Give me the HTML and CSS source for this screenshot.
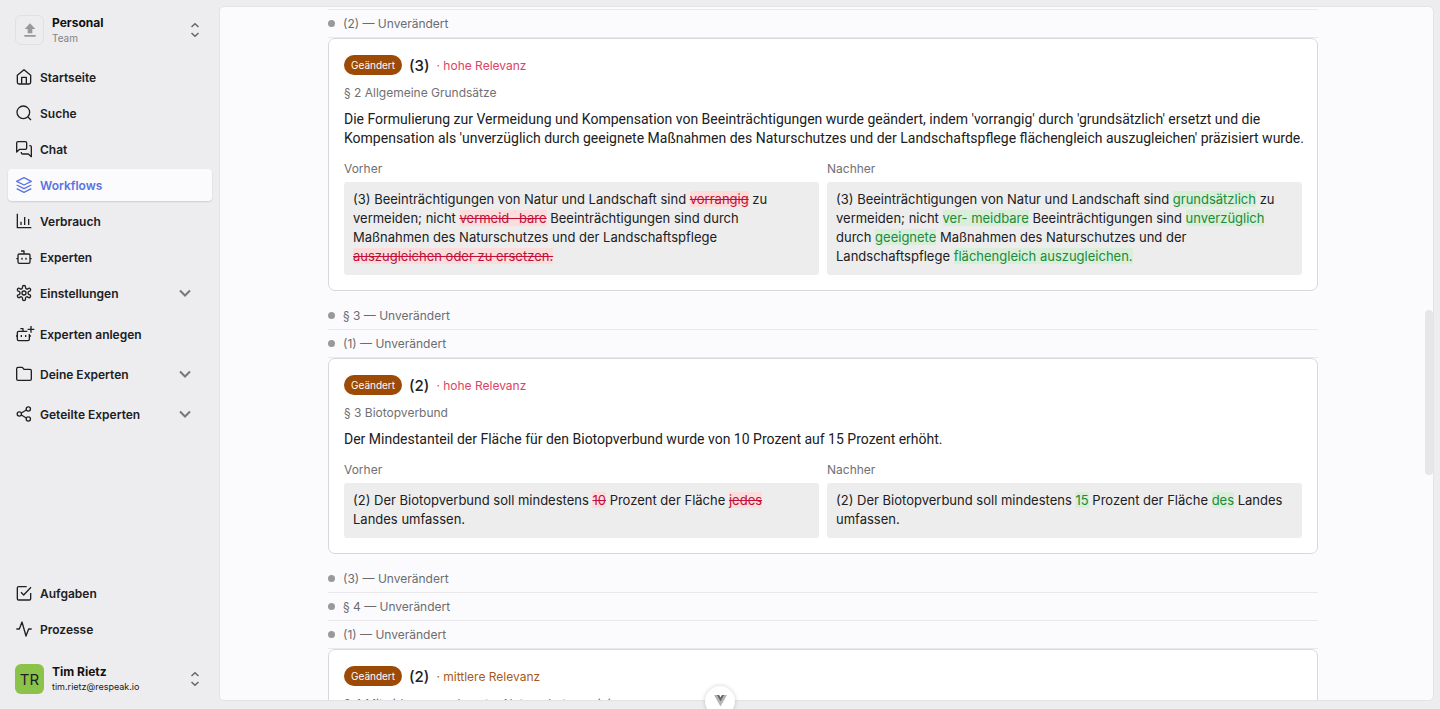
FILE: index.html
```html
<!DOCTYPE html>
<html lang="de">
<head>
<meta charset="utf-8">
<title>Workflows</title>
<link rel="stylesheet" href="styles.css">
</head>
<body>
<svg class="defs" aria-hidden="true">
  <symbol id="updown" viewBox="0 0 12 18"><path d="M2.500 6 6 2.800 9.500 6M2.500 12 6 15.200l3.500-3.200"/></symbol>
  <symbol id="chevron" viewBox="0 0 12 12"><path d="M1 3.500l5 5 5-5"/></symbol>
</svg>
<div class="app">
  <aside class="sidebar">
    <button class="account" type="button">
      <span class="team-logo"><svg viewBox="0 0 24 24" class="upload"><path d="M12 2 4 10.500h4.500V17h7v-6.500H20zM3.500 19.500h17V22h-17z"/></svg></span>
      <span class="account-text"><strong>Personal</strong><small class="muted">Team</small></span>
      <svg class="updown"><use href="#updown"/></svg>
    </button>
    <nav class="nav">
      <a class="item" href="#"><svg class="icon" viewBox="0 0 24 24"><path d="M2 9.500 12 1l10 8.500V20a2.500 2.500 0 0 1-2.500 2.500h-15A2.500 2.500 0 0 1 2 20z"/><path d="M8.500 22v-9.500h7V22"/></svg>Startseite</a>
      <a class="item" href="#"><svg class="icon" viewBox="0 0 24 24"><circle cx="11" cy="11" r="9.500"/><path d="m18 18 4.500 4.500"/></svg>Suche</a>
      <a class="item" href="#"><svg class="icon" viewBox="0 0 24 24"><path d="M16 10.500a2 2 0 0 1-2 2H5.500L1 16.500V3a2 2 0 0 1 2-2h11a2 2 0 0 1 2 2z"/><path d="M20 7h1a2 2 0 0 1 2 2v14.500l-4.500-4H10a2 2 0 0 1-2-2V16.500"/></svg>Chat</a>
      <a class="item active" href="#" aria-current="page"><svg class="icon" viewBox="0 0 24 24"><path d="M12 1 1 6.500 12 12l11-5.500zM1 12l11 5.500L23 12M1 17.500 12 23l11-5.500"/></svg>Workflows</a>
      <a class="item" href="#"><svg class="icon" viewBox="0 0 24 24"><path d="M2 1v21h21M7.500 18v-5M13 18V6M19 18V9"/></svg>Verbrauch</a>
      <a class="item" href="#"><svg class="icon" viewBox="0 0 24 24"><path d="M12 7.500V3H7.500"/><rect x="3" y="7.500" width="18" height="14" rx="2"/><path d="M.500 14.500H3M21 14.500h2.500M9 13v3M15 13v3"/></svg>Experten</a>
      <a class="item" href="#"><svg class="icon" viewBox="0 0 24 24"><path d="M9.700 3.100a2.300 2.300 0 0 1 4.600 0 2.300 2.300 0 0 0 4 2.100 2.300 2.300 0 0 1 2.500 4 2.300 2.300 0 0 0 0 5.500 2.300 2.300 0 0 1-2.500 4 2.300 2.300 0 0 0-4 2.200 2.300 2.300 0 0 1-4.600 0 2.300 2.300 0 0 0-4-2.200 2.300 2.300 0 0 1-2.500-4 2.300 2.300 0 0 0 0-5.500 2.300 2.300 0 0 1 2.500-4 2.300 2.300 0 0 0 4-2.100z"/><circle cx="12" cy="12" r="3"/></svg>Einstellungen<svg class="chevron"><use href="#chevron"/></svg></a>
    </nav>
    <nav class="nav groups">
      <a class="item" href="#"><svg class="icon" viewBox="0 0 24 24"><path d="M10.500 8V4H6.500M17 8H4a2 2 0 0 0-2 2v10a2 2 0 0 0 2 2h14a2 2 0 0 0 2-2v-8M0 15h2M20 15h2.500M8 13.500v3M14.500 13.500v3M22.500 0v10M17.500 5h10"/></svg>Experten anlegen</a>
      <a class="item" href="#"><svg class="icon" viewBox="0 0 24 24"><path d="M21 21.500a2 2 0 0 0 2-2V7a2 2 0 0 0-2-2h-9L9.500 2H3a2 2 0 0 0-2 2v15.500a2 2 0 0 0 2 2z"/></svg>Deine Experten<svg class="chevron"><use href="#chevron"/></svg></a>
      <a class="item" href="#"><svg class="icon" viewBox="0 0 24 24"><circle cx="18.500" cy="4.500" r="3.200"/><circle cx="5" cy="12" r="3.200"/><circle cx="18.500" cy="19.500" r="3.200"/><path d="m8 13.500 7.500 4.500M15.500 6 8 10.500"/></svg>Geteilte Experten<svg class="chevron"><use href="#chevron"/></svg></a>
    </nav>
    <nav class="nav bottom">
      <a class="item" href="#"><svg class="icon" viewBox="0 0 24 24"><path d="m7.500 11 4 4L22.500 3.500M22 12v8.500a2 2 0 0 1-2 2H4a2 2 0 0 1-2-2v-16a2 2 0 0 1 2-2h12"/></svg>Aufgaben</a>
      <a class="item" href="#"><svg class="icon" viewBox="0 0 24 24"><path d="M.500 12H5L9 1.500l6 21L19 12h4.500"/></svg>Prozesse</a>
    </nav>
    <button class="account" type="button">
      <span class="avatar">TR</span>
      <span class="account-text"><strong>Tim Rietz</strong><small class="mail">tim.rietz@respeak.io</small></span>
      <svg class="updown"><use href="#updown"/></svg>
    </button>
  </aside>
  <main class="panel">
    <div class="content">
      <div class="row first"><i class="dot"></i>(2) — Unverändert</div>
      <article class="card">
        <header class="card-head"><span class="badge">Geändert</span><h2>(3)</h2><span class="high">· hohe Relevanz</span></header>
        <p class="section">§ 2 Allgemeine Grundsätze</p>
        <p class="summary">Die Formulierung zur Vermeidung und Kompensation von Beeinträchtigungen wurde geändert, indem 'vorrangig' durch 'grundsätzlich' ersetzt und die<br>Kompensation als 'unverzüglich durch geeignete Maßnahmen des Naturschutzes und der Landschaftspflege flächengleich auszugleichen' präzisiert wurde.</p>
        <div class="compare">
          <section><h3>Vorher</h3><p class="text">(3) Beeinträchtigungen von Natur und Landschaft sind <del>vorrangig</del> zu<br>vermeiden; nicht <del>vermeid- bare</del> Beeinträchtigungen sind durch<br>Maßnahmen des Naturschutzes und der Landschaftspflege<br><del>auszugleichen oder zu ersetzen.</del></p></section>
          <section><h3>Nachher</h3><p class="text">(3) Beeinträchtigungen von Natur und Landschaft sind <ins>grundsätzlich</ins> zu<br>vermeiden; nicht <ins>ver- meidbare</ins> Beeinträchtigungen sind <ins>unverzüglich</ins><br>durch <ins>geeignete</ins> Maßnahmen des Naturschutzes und der<br>Landschaftspflege <ins>flächengleich auszugleichen.</ins></p></section>
        </div>
      </article>
      <div class="row"><i class="dot"></i>§ 3 — Unverändert</div>
      <div class="row"><i class="dot"></i>(1) — Unverändert</div>
      <article class="card">
        <header class="card-head"><span class="badge">Geändert</span><h2>(2)</h2><span class="high">· hohe Relevanz</span></header>
        <p class="section">§ 3 Biotopverbund</p>
        <p class="summary">Der Mindestanteil der Fläche für den Biotopverbund wurde von 10 Prozent auf 15 Prozent erhöht.</p>
        <div class="compare">
          <section><h3>Vorher</h3><p class="text">(2) Der Biotopverbund soll mindestens <del>10</del> Prozent der Fläche <del>jedes</del><br>Landes umfassen.</p></section>
          <section><h3>Nachher</h3><p class="text">(2) Der Biotopverbund soll mindestens <ins>15</ins> Prozent der Fläche <ins>des</ins> Landes<br>umfassen.</p></section>
        </div>
      </article>
      <div class="row"><i class="dot"></i>(3) — Unverändert</div>
      <div class="row"><i class="dot"></i>§ 4 — Unverändert</div>
      <div class="row"><i class="dot"></i>(1) — Unverändert</div>
      <article class="card">
        <header class="card-head"><span class="badge">Geändert</span><h2>(2)</h2><span class="medium">· mittlere Relevanz</span></header>
        <p class="section">§ 4 Mitwirkung anerkannter Naturschutzvereinigungen</p>
      </article>
    </div>
    <div class="thumb"></div>
  </main>
</div>
<button class="devtools" type="button" aria-label="Vue DevTools"><svg viewBox="0 0 24 22"><path fill="#b5b5b5" d="M0 0h5l7 12 7-12h5L12 21z"/><path fill="#666" d="M5 0h4.500L12 4.500 14.500 0H19l-7 12z"/></svg></button>
</body>
</html>
```
FILE: styles.css
```css
* { box-sizing: border-box; }
body {
  margin: 0;
  background: #ededef;
  color: #202022;
  font-family: Inter, "Liberation Sans", sans-serif;
  font-size: 13px;
}
h2, h3, p { margin: 0; }
button { font: inherit; color: inherit; }
.defs { display: none; }
.app { display: flex; height: 100vh; padding: 6px 6px 8px 0; }

.sidebar { display: flex; flex-direction: column; width: 219px; flex: none; padding: 9px 7px 7px 8px; }
.account {
  display: flex; align-items: center; gap: 8px; width: 100%;
  padding: 0 11px 0 7px; border: 0; background: none; text-align: left;
}
.team-logo, .avatar {
  display: flex; align-items: center; justify-content: center;
  width: 29px; height: 30px; border-radius: 6px;
}
.team-logo { border: 1px solid #e0e0e2; }
.upload { width: 16px; height: 16px; fill: #999; }
.avatar { background: #8bc34a; font-size: 15px; }
.account-text { display: flex; flex-direction: column; flex: 1; }
.account-text strong { font-size: 12px; line-height: 16px; font-weight: 700; color: #111; }
.account-text small { font-size: 10px; line-height: 14px; }
.account-text .muted { color: #828284; }
.account-text .mail { font-size: 9px; }
.updown { width: 12px; height: 18px; fill: none; stroke: #666; stroke-width: 1.500; }
.nav { display: flex; flex-direction: column; gap: 4px; margin-top: 16px; }
.nav.groups { gap: 8px; margin-top: 9px; }
.nav.bottom { margin: auto 0 19px; }
.item {
  display: flex; align-items: center; gap: 8px; height: 32px; padding: 0 21px 0 8px;
  border-radius: 4px; color: #202022; font-size: 12px; font-weight: 600; text-decoration: none;
}
.item.active { background: #fbfbfe; color: #5b73e0; box-shadow: 0 1px 2px #0002; }
.icon { width: 16px; height: 16px; flex: none; overflow: visible; fill: none; stroke: currentColor; stroke-width: 2; stroke-linejoin: round; }
.chevron { width: 12px; height: 12px; margin-left: auto; fill: none; stroke: #777; stroke-width: 2; }

.panel {
  position: relative; flex: 1; overflow: hidden; padding: 0 115px 0 108px;
  background: #fbfbfe; border: 1px solid #e3e3e5; border-radius: 5px;
}
.row {
  display: flex; align-items: center; gap: 8px; height: 28px;
  border-bottom: 1px solid #e9e9ec; color: #6c6c6e; font-size: 12px;
}
.row.first { margin-top: 2px; height: 29px; border-top: 1px solid #e9e9ec; }
.dot { width: 7px; height: 7px; border-radius: 50%; background: #999; }
.card {
  margin-bottom: 11px; padding: 15px; background: #fff;
  border: 1px solid #d8d8da; border-radius: 7px;
}
.card-head { display: flex; align-items: center; gap: 7px; height: 22px; font-size: 12px; }
.badge { padding: 0 7px; border-radius: 10px; background: #9c4a06; color: #fff; font-size: 10px; line-height: 20px; }
.card-head h2 { font-size: 15px; font-weight: 500; }
.high { color: #dc4462; }
.medium { color: #a65a1c; }
.section { margin-top: 9px; color: #707072; font-size: 12px; line-height: 16px; }
.summary { margin: 9px -12px 0 0; font-family: Roboto, sans-serif; font-size: 14px; line-height: 19px; }
.compare { display: grid; grid-template-columns: 1fr 1fr; gap: 8px; margin-top: 13px; }
.compare h3 { margin-bottom: 5px; color: #707072; font-size: 12px; font-weight: 400; line-height: 16px; }
.text { padding: 8px 9px 9px; border-radius: 3px; background: #ededed; font-size: 13px; line-height: 19px; }
del { background: #fddcdc; color: #c0103a; }
ins { background: #d9efd9; color: #208a3c; text-decoration: none; }
.thumb { position: absolute; top: 303px; right: 0; width: 8px; height: 165px; border-radius: 4px; background: #e6e6e8; }
.devtools {
  position: fixed; left: calc(50% - 15px); bottom: -7px; width: 30px; height: 30px;
  display: flex; justify-content: center; padding: 9px 0 0;
  border: 0; border-radius: 50%; background: #fff; box-shadow: 0 0 4px #0003;
}
.devtools svg { width: 13px; height: 12px; }
```
